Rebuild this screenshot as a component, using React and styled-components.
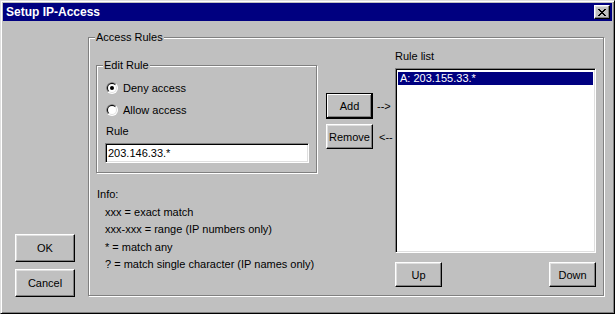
import React from 'react'
import styled, { createGlobalStyle } from 'styled-components'

const GlobalStyle = createGlobalStyle`
  html, body {
    margin: 0;
    padding: 0;
    background: #c0c0c0;
  }
  body {
    font-family: "Liberation Sans", Arial, sans-serif;
    font-size: 11px;
    line-height: 14px;
    color: #000;
    white-space: nowrap;
  }
`

const Window = styled.div`
  width: 615px;
  height: 314px;
  box-sizing: border-box;
  background: #c0c0c0;
  border: 1px solid;
  border-color: #dfdfdf #000 #000 #dfdfdf;
  box-shadow: inset 1px 1px #fff, inset -1px -1px #808080;
  padding: 2px;
  display: flex;
  flex-direction: column;
`

const TitleBar = styled.div`
  height: 18px;
  flex: none;
  background: #000080;
  color: #fff;
  font-size: 12px;
  font-weight: bold;
  display: flex;
  align-items: center;
  justify-content: space-between;
  padding: 0 2px 0 3px;
`

const CloseButton = styled.div`
  width: 16px;
  height: 14px;
  box-sizing: border-box;
  background: #c0c0c0;
  border: 1px solid;
  border-color: #fff #000 #000 #fff;
  box-shadow: inset -1px -1px #808080, inset 1px 1px #dfdfdf;
  display: flex;
  align-items: center;
  justify-content: center;
`

const Body = styled.div`
  flex: 1;
  display: flex;
  padding: 16px 8px 15px 12px;
  gap: 13px;
`

const SideColumn = styled.div`
  width: 60px;
  display: flex;
  flex-direction: column;
  justify-content: flex-end;
  gap: 7px;
  margin-bottom: -1px;
`

const Button = styled.div`
  width: ${p => p.$w || 47}px;
  height: ${p => p.$h || 25}px;
  box-sizing: border-box;
  background: #c0c0c0;
  border: 1px solid;
  border-color: #fff #000 #000 #fff;
  box-shadow: inset -1px -1px #808080, inset 1px 1px #dfdfdf;
  display: flex;
  align-items: center;
  justify-content: center;
  flex: none;
`

const DefaultButton = styled(Button)`
  border-color: #000;
  box-shadow: inset -1px -1px #000, inset 1px 1px #fff, inset -2px -2px #808080;
`

const GroupBox = styled.div`
  position: relative;
  box-sizing: border-box;
  border: 1px solid #808080;
  box-shadow: inset 1px 1px #fff, 1px 1px #fff;
`

const Legend = styled.span`
  position: absolute;
  top: -8px;
  left: 6px;
  padding: 0 1px;
  background: #c0c0c0;
`

const AccessGroup = styled(GroupBox)`
  flex: 1;
  display: flex;
  padding: 0 7px 8px 7px;
`

const EditColumn = styled.div`
  width: 221px;
  margin-top: 27px;
  display: flex;
  flex-direction: column;
`

const EditGroup = styled(GroupBox)`
  height: 108px;
  padding: 15px 8px 9px 8px;
  display: flex;
  flex-direction: column;
`

const RadioRow = styled.div`
  display: flex;
  align-items: center;
  gap: 5px;
  height: 14px;
  margin-left: 1px;
  margin-bottom: ${p => p.$mb || 0}px;
`

const Label = styled.div`
  margin: 7px 0 5px 1px;
`

const sunken = `
  box-sizing: border-box;
  background: #fff;
  border: 1px solid;
  border-color: #808080 #fff #fff #808080;
  box-shadow: inset 1px 1px #000, inset -1px -1px #dfdfdf;
`

const TextField = styled.div`
  ${sunken}
  width: 204px;
  height: 20px;
  padding: 2px 2px 0;
`

const Info = styled.div`
  margin: 13px 0 0 1px;
  line-height: 17.5px;
`

const InfoLine = styled.div`
  padding-left: ${p => (p.$indent ? 8 : 0)}px;
`

const MoveColumn = styled.div`
  width: 69px;
  margin: 55px 0 0 9px;
  display: flex;
  flex-direction: column;
  gap: 5px;
`

const MoveRow = styled.div`
  display: flex;
  align-items: center;
  gap: ${p => p.$gap}px;
`

const ListColumn = styled.div`
  flex: 1;
  margin-top: 11px;
  display: flex;
  flex-direction: column;
`

const ListBox = styled.div`
  ${sunken}
  flex: 1;
  margin-top: 5px;
  padding: 3px 2px 2px 2px;
`

const ListItem = styled.div`
  height: 13px;
  line-height: 13px;
  padding-left: 2px;
  background: ${p => (p.$selected ? '#000080' : 'transparent')};
  color: ${p => (p.$selected ? '#fff' : '#000')};
`

const ListButtons = styled.div`
  display: flex;
  justify-content: space-between;
  margin-top: 9px;
`

const Radio = ({ checked }) => (
  <svg width="12" height="12" viewBox="0 0 12 12">
    <circle cx="6" cy="6" r="6" fill="#fff" />
    <path d="M1.757 10.243A6 6 0 0 1 10.243 1.757Z" fill="#808080" />
    <circle cx="6" cy="6" r="5" fill="#dfdfdf" />
    <path d="M2.464 9.536A5 5 0 0 1 9.536 2.464Z" fill="#000" />
    <circle cx="6" cy="6" r="4" fill="#fff" />
    {checked && <circle cx="6" cy="6" r="2" fill="#000" />}
  </svg>
)

const CloseGlyph = () => (
  <svg width="8" height="7" viewBox="0 0 8 7" shapeRendering="crispEdges">
    <path
      d="M0 0h2v1h-2zM6 0h2v1h-2zM1 1h2v1h-2zM5 1h2v1h-2zM2 2h4v1h-4zM3 3h2v1h-2zM2 4h4v1h-4zM1 5h2v1h-2zM5 5h2v1h-2zM0 6h2v1h-2zM6 6h2v1h-2z"
      fill="#000"
    />
  </svg>
)

const App = () => {
  return (
    <>
      <GlobalStyle />
      <Window>
        <TitleBar>
          <span>Setup IP-Access</span>
          <CloseButton>
            <CloseGlyph />
          </CloseButton>
        </TitleBar>
        <Body>
          <SideColumn>
            <Button $w={60} $h={28}>OK</Button>
            <Button $w={60} $h={28}>Cancel</Button>
          </SideColumn>
          <AccessGroup>
            <Legend>Access Rules</Legend>
            <EditColumn>
              <EditGroup>
                <Legend>Edit Rule</Legend>
                <RadioRow $mb={8}>
                  <Radio checked />
                  <span>Deny access</span>
                </RadioRow>
                <RadioRow>
                  <Radio />
                  <span>Allow access</span>
                </RadioRow>
                <Label>Rule</Label>
                <TextField>203.146.33.*</TextField>
              </EditGroup>
              <Info>
                <InfoLine>Info:</InfoLine>
                <InfoLine $indent>xxx = exact match</InfoLine>
                <InfoLine $indent>xxx-xxx = range (IP numbers only)</InfoLine>
                <InfoLine $indent>* = match any</InfoLine>
                <InfoLine $indent>? = match single character (IP names only)</InfoLine>
              </Info>
            </EditColumn>
            <MoveColumn>
              <MoveRow $gap={4}>
                <DefaultButton $h={26}>Add</DefaultButton>
                <span>--&gt;</span>
              </MoveRow>
              <MoveRow $gap={6}>
                <Button>Remove</Button>
                <span>&lt;--</span>
              </MoveRow>
            </MoveColumn>
            <ListColumn>
              <span>Rule list</span>
              <ListBox>
                <ListItem $selected>A: 203.155.33.*</ListItem>
              </ListBox>
              <ListButtons>
                <Button>Up</Button>
                <Button>Down</Button>
              </ListButtons>
            </ListColumn>
          </AccessGroup>
        </Body>
      </Window>
    </>
  )
}

export default App
